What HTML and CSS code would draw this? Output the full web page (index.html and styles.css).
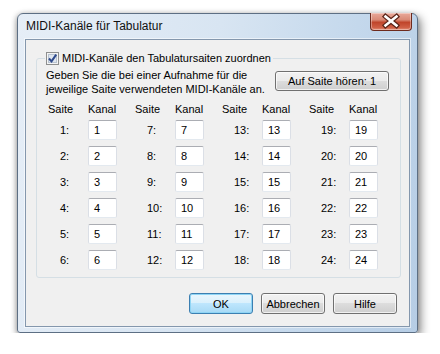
FILE: index.html
```html
<!DOCTYPE html>
<html lang="de">
<head>
    <meta charset="UTF-8">
    <title>MIDI-Kanäle für Tabulatur</title>
    <link rel="stylesheet" href="styles.css">
</head>
<body>
    <div class="window">
        <div class="titlebar">
            <span class="title">MIDI-Kanäle für Tabulatur</span>
            <div class="close">
                <svg width="42" height="18" viewBox="0 0 42 18">
                    <path d="M15.5 4.5 L26.5 13.5 M26.5 4.5 L15.5 13.5" stroke="#5a2418" stroke-width="5" stroke-linecap="square" fill="none"/>
                    <path d="M15.5 4.5 L26.5 13.5 M26.5 4.5 L15.5 13.5" stroke="#ffffff" stroke-width="2.6" stroke-linecap="square" fill="none"/>
                </svg>
            </div>
        </div>

        <div class="client">
            <div class="group">
                <label class="group-title">
                    <span class="check">
                        <svg width="13" height="13" viewBox="0 0 13 13">
                            <rect x="0.5" y="0.5" width="12" height="12" fill="#f4f4f4" stroke="#8e8f8f"/>
                            <rect x="2.5" y="2.5" width="8" height="8" fill="#dfe6ef" stroke="#b9c3d0"/>
                            <path d="M3 6.5 L5.5 9.3 L10.2 2.6" stroke="#2f4a8c" stroke-width="2" fill="none"/>
                        </svg>
                    </span>
                    MIDI-Kanäle den Tabulatursaiten zuordnen
                </label>

                <div class="intro">
                    <p>Geben Sie die bei einer Aufnahme für die<br>jeweilige Saite verwendeten MIDI-Kanäle an.</p>
                    <button class="btn listen">Auf Saite hören: 1</button>
                </div>

                <div class="channels">
                    <span class="head">Saite</span><span class="head">Kanal</span>
                    <span class="head">Saite</span><span class="head">Kanal</span>
                    <span class="head">Saite</span><span class="head">Kanal</span>
                    <span class="head">Saite</span><span class="head">Kanal</span>

                    <span class="num">1:</span><span class="field">1</span>
                    <span class="num">7:</span><span class="field">7</span>
                    <span class="num">13:</span><span class="field">13</span>
                    <span class="num">19:</span><span class="field">19</span>

                    <span class="num">2:</span><span class="field">2</span>
                    <span class="num">8:</span><span class="field">8</span>
                    <span class="num">14:</span><span class="field">14</span>
                    <span class="num">20:</span><span class="field">20</span>

                    <span class="num">3:</span><span class="field">3</span>
                    <span class="num">9:</span><span class="field">9</span>
                    <span class="num">15:</span><span class="field">15</span>
                    <span class="num">21:</span><span class="field">21</span>

                    <span class="num">4:</span><span class="field">4</span>
                    <span class="num">10:</span><span class="field">10</span>
                    <span class="num">16:</span><span class="field">16</span>
                    <span class="num">22:</span><span class="field">22</span>

                    <span class="num">5:</span><span class="field">5</span>
                    <span class="num">11:</span><span class="field">11</span>
                    <span class="num">17:</span><span class="field">17</span>
                    <span class="num">23:</span><span class="field">23</span>

                    <span class="num">6:</span><span class="field">6</span>
                    <span class="num">12:</span><span class="field">12</span>
                    <span class="num">18:</span><span class="field">18</span>
                    <span class="num">24:</span><span class="field">24</span>
                </div>
            </div>

            <div class="actions">
                <button class="btn default">OK</button>
                <button class="btn">Abbrechen</button>
                <button class="btn">Hilfe</button>
            </div>
        </div>
    </div>
</body>
</html>
```

FILE: styles.css
```css
body {
    margin: 0;
    padding: 13px 0 0 17px;
    background: #ffffff;
    font-family: "Liberation Sans", Arial, sans-serif;
    font-size: 11px;
    color: #000;
}
.window {
    width: 401px;
    height: 320px;
    box-sizing: border-box;
    border: 1px solid #5d6f84;
    border-radius: 6px 6px 3px 3px;
    background: linear-gradient(100deg, #e6eef7 0%, #d8e5f2 45%, #c4d8ec 75%, #b6cde5 100%);
    box-shadow: 3px 4px 10px rgba(0, 0, 0, 0.45), -1px 1px 5px rgba(0, 0, 0, 0.25);
    display: flex;
    flex-direction: column;
}
.titlebar {
    height: 25px;
    display: flex;
    align-items: flex-start;
    justify-content: space-between;
}
.title {
    padding: 5px 0 0 8px;
    font-size: 12px;
    line-height: 15px;
    color: #111;
}
.close {
    width: 42px;
    height: 18px;
    margin: -1px 5px 0 0;
    border: 1px solid #6d2a1d;
    border-top: none;
    border-radius: 0 0 4px 4px;
    background: linear-gradient(#e9a99a 0%, #d98a76 40%, #c0452b 55%, #cf5f45 85%, #e3917a 100%);
    box-shadow: inset 0 0 0 1px rgba(255, 255, 255, 0.35);
    box-sizing: border-box;
}
.close svg {
    display: block;
    margin: -1px 0 0 -1px;
}
.client {
    margin: 0 7px 0 7px;
    height: 288px;
    box-sizing: border-box;
    border: 1px solid #8497ad;
    background: #f0f0f0;
    box-shadow: 0 0 0 1px rgba(255, 255, 255, 0.55);
}
.group {
    margin: 18px 10px 0 10px;
    width: 365px;
    box-sizing: border-box;
    border: 1px solid #d5dfe5;
    border-radius: 3px;
    padding: 0 11px 7px 9px;
}
.group-title {
    display: flex;
    align-items: center;
    gap: 3px;
    width: max-content;
    margin: -8px 0 0 -1px;
    padding: 0 2px 0 1px;
    line-height: 15px;
    background: #f0f0f0;
}
.check svg {
    display: block;
}
.intro {
    display: flex;
    justify-content: space-between;
    align-items: flex-start;
    margin-top: 2px;
}
.intro p {
    margin: 0;
    line-height: 14px;
}
.btn {
    font-family: inherit;
    font-size: 11px;
    color: #000;
    height: 21px;
    padding: 0;
    border: 1px solid #707070;
    border-radius: 3px;
    background: linear-gradient(#f2f2f2 0%, #ebebeb 49%, #dddddd 50%, #cfcfcf 100%);
    box-shadow: inset 0 0 0 1px rgba(255, 255, 255, 0.7);
}
.listen {
    width: 114px;
    height: 20px;
    margin-top: 3px;
}
.channels {
    display: grid;
    grid-template-columns: repeat(4, 40px 47px);
    grid-template-rows: 12px repeat(6, 20px);
    row-gap: 6px;
    margin-top: 6px;
    padding-left: 2px;
    align-items: center;
}
.head {
    align-self: start;
    line-height: 14px;
}
.num {
    padding-left: 12px;
}
.field {
    width: 29px;
    height: 20px;
    box-sizing: border-box;
    border: 1px solid #dbdfe6;
    border-top-color: #abadb3;
    border-bottom-color: #e3e9ef;
    border-radius: 2px;
    background: #ffffff;
    padding-left: 5px;
    line-height: 18px;
}
.actions {
    display: flex;
    justify-content: flex-end;
    gap: 8px;
    margin-top: 15px;
    padding-right: 12px;
}
.actions .btn {
    width: 64px;
}
.btn.default {
    border-color: #3c7fb1;
    background: linear-gradient(#eaf6fd 0%, #d9f0fc 49%, #bee6fd 50%, #a7d9f5 100%);
    box-shadow: inset 0 0 0 1px #8fd5f5;
}
```
